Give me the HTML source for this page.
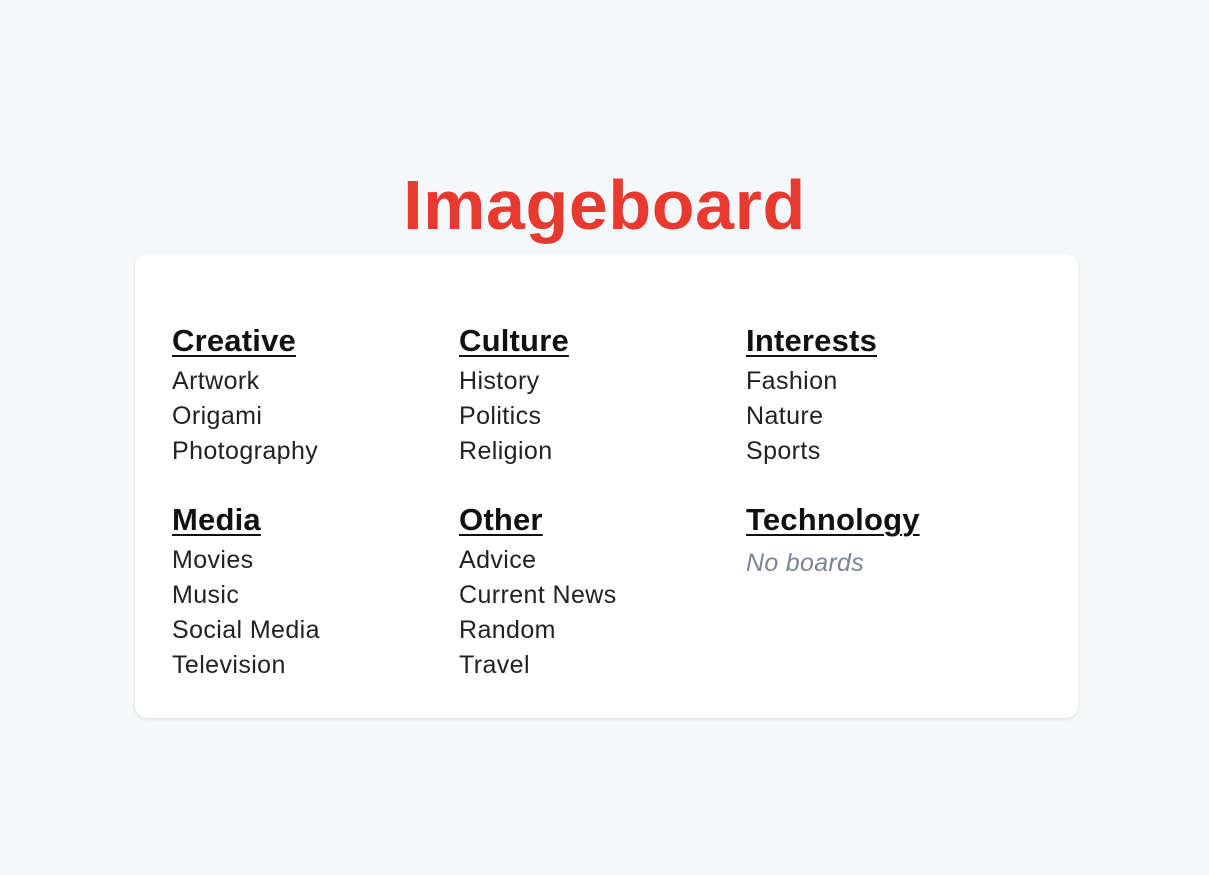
<!DOCTYPE html>
<html><head><style>
body{margin:0;background:#f5f8fb;font-family:"Liberation Sans",sans-serif;width:1209px;height:875px;position:relative;}
h1{position:absolute;top:165px;left:0;width:1209px;text-align:center;margin:0;font-size:70px;font-weight:bold;color:#e8392f;letter-spacing:0.6px;}
.card{position:absolute;left:135px;top:254px;width:943px;height:464px;background:#fff;border-radius:12px;box-shadow:0 1px 3px rgba(0,0,0,0.12);}
.col{position:absolute;}
.col h2{margin:0 0 3px;font-size:31px;font-weight:bold;text-decoration:underline;text-decoration-thickness:2px;text-underline-offset:4px;color:#111;line-height:40px;letter-spacing:0.2px;}
.col div{font-size:25px;color:#222;line-height:35px;letter-spacing:0.4px;}
.col i{font-size:25px;color:#7a8496;line-height:40px;letter-spacing:0.3px;}
</style></head><body>
<h1>Imageboard</h1>
<div class="card">
<div class="col" style="left:37px;top:67px"><h2>Creative</h2><div>Artwork</div><div>Origami</div><div>Photography</div></div>
<div class="col" style="left:324px;top:67px"><h2>Culture</h2><div>History</div><div>Politics</div><div>Religion</div></div>
<div class="col" style="left:611px;top:67px"><h2>Interests</h2><div>Fashion</div><div>Nature</div><div>Sports</div></div>
<div class="col" style="left:37px;top:246px"><h2>Media</h2><div>Movies</div><div>Music</div><div>Social Media</div><div>Television</div></div>
<div class="col" style="left:324px;top:246px"><h2>Other</h2><div>Advice</div><div>Current News</div><div>Random</div><div>Travel</div></div>
<div class="col" style="left:611px;top:246px"><h2>Technology</h2><i>No boards</i></div>
</div>
</body></html>
